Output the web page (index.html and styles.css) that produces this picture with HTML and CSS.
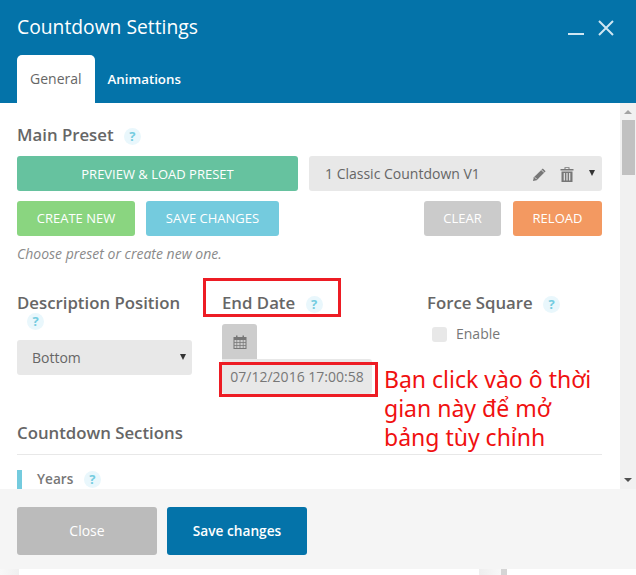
FILE: index.html
```html
<!DOCTYPE html>
<html lang="vi">
<head>
<meta charset="utf-8">
<title>Countdown Settings</title>
<link rel="stylesheet" href="styles.css">
</head>
<body>
<div class="modal">
  <header class="head">
    <div class="title-row">
      <h1 class="title">Countdown Settings</h1>
      <div class="win-btns">
        <span class="min"></span>
        <svg class="close-x" width="16" height="16" viewBox="0 0 16 16"><path d="M1 1l14 14M15 1L1 15" stroke="#cfe6f2" stroke-width="2" fill="none"/></svg>
      </div>
    </div>
    <nav class="tabs">
      <span class="tab active">General</span>
      <span class="tab">Animations</span>
    </nav>
  </header>
  <div class="body">
    <main class="content">
      <h2 class="h">Main Preset <span class="q">?</span></h2>
      <div class="row-preset">
        <button class="btn wide green-dark">PREVIEW &amp; LOAD PRESET</button>
        <div class="preset-select">
          <span>1 Classic Countdown V1</span>
          <svg class="pencil" width="15" height="15" viewBox="0 0 16 16"><path d="M11.500 1.500l3 3L5 14l-4 1 1-4z" fill="#777"/><path d="M3 11l2 2M10 3l3 3" stroke="#e8e8e8" stroke-width="1"/></svg>
          <svg class="trash" width="14" height="16" viewBox="0 0 14 16"><path d="M0.500 3h13v1.500h-13zM4.500 3V1.200h5V3H8.500V2h-3v1z" fill="#777"/><path fill-rule="evenodd" d="M1.500 5.500h11V16h-11zM3.700 7v7.500h1.200V7zM6.400 7v7.500h1.200V7zM9.100 7v7.500h1.200V7z" fill="#777"/></svg>
          <span class="arrow arrow-preset"></span>
        </div>
      </div>
      <div class="row-actions">
        <button class="btn create">CREATE NEW</button>
        <button class="btn save">SAVE CHANGES</button>
        <span class="spacer"></span>
        <button class="btn clear">CLEAR</button>
        <button class="btn reload">RELOAD</button>
      </div>
      <p class="hint">Choose preset or create new one.</p>
      <div class="cols">
        <div class="col col-desc">
          <h2 class="h">Description Position <span class="q q-wrap">?</span></h2>
          <div class="select-box">Bottom<span class="arrow"></span></div>
        </div>
        <div class="col col-date">
          <h2 class="h">End Date <span class="q">?</span></h2>
          <div class="cal">
            <svg width="14" height="14" viewBox="0 0 14 14"><path fill-rule="evenodd" d="M0.500 2h2.500V0.500h1.500V2h5V0.500h1.500V2h2.500v12H0.500zM1.500 5v2h2V5zM4.200 5v2h2.400V5zM7.400 5v2h2.400V5zM10.500 5v2h2V5zM1.500 7.800v2.400h2V7.800zM4.200 7.800v2.400h2.400V7.800zM7.400 7.800v2.400h2.400V7.800zM10.500 7.800v2.400h2V7.800zM1.500 11v2h2v-2zM4.200 11v2h2.400v-2zM7.400 11v2h2.400v-2zM10.500 11v2h2v-2z" fill="#777"/></svg>
          </div>
          <div class="date-input">07/12/2016 17:00:58</div>
        </div>
        <div class="col col-force">
          <h2 class="h">Force Square <span class="q">?</span></h2>
          <label class="enable"><span class="check"></span>Enable</label>
        </div>
      </div>
      <h2 class="h sections">Countdown Sections</h2>
      <div class="section-item">Years <span class="q">?</span></div>
      <div class="mark mark-title"></div>
      <div class="mark mark-date"></div>
      <p class="note">Bạn click vào ô thời gian này để mở bảng tùy chỉnh</p>
    </main>
    <aside class="scrollbar">
      <span class="sb-up"></span>
      <span class="sb-thumb"></span>
      <span class="sb-down"></span>
    </aside>
  </div>
  <footer class="foot">
    <button class="fbtn fclose">Close</button>
    <button class="fbtn fsave">Save changes</button>
  </footer>
  <div class="below"><span class="b1"></span><span class="b2"></span><span class="b3"></span><span class="b4"></span></div>
</div>
</body>
</html>
```
FILE: styles.css
```css
* { box-sizing: border-box; }
html, body { margin: 0; padding: 0; height: 575px; overflow: hidden; background: #fff; }
body { font-family: "Open Sans", sans-serif; color: #666; }
.modal { width: 636px; height: 575px; display: flex; flex-direction: column; }

.head { background: #0473a9; height: 103px; padding: 0 17px; display: flex; flex-direction: column; flex: none; }
.title-row { height: 55px; display: flex; justify-content: space-between; }
.title { margin: 14px 0 0; font-size: 19.300px; line-height: 26px; font-weight: 400; color: #fff; }
.win-btns { display: flex; align-items: flex-start; margin-right: 5px; }
.min { width: 16px; height: 2px; background: #cfe6f2; margin: 33px 14px 0 0; }
.close-x { margin-top: 20px; }
.tabs { display: flex; height: 48px; }
.tab { padding: 0 13px; font-size: 13.300px; line-height: 48px; font-weight: 600; color: #fff; border-radius: 5px 5px 0 0; }
.tab.active { background: #fff; color: #666; font-weight: 400; font-size: 14px; }

.body { flex: none; height: 386px; display: flex; overflow: hidden; }
.content { position: relative; width: 620px; padding: 22px 18px 0 17px; }
.h { margin: 0; font-size: 16.800px; line-height: 20px; font-weight: 600; color: #666; }
.q { display: inline-block; width: 17px; height: 17px; margin-left: 6px; border-radius: 50%; background: #e9f7fc; color: #74cce0; font-size: 13px; line-height: 17px; font-weight: 700; text-align: center; vertical-align: 0; }

button { font-family: inherit; border: 0; color: #fff; padding: 0; }
.btn { height: 35px; border-radius: 3px; font-size: 13px; }
.row-preset { display: flex; justify-content: space-between; margin-top: 11px; }
.wide { width: 281px; }
.green-dark { background: #66c29f; }
.preset-select { position: relative; width: 293px; height: 35px; background: #e8e8e8; border-radius: 3px; font-size: 14px; line-height: 35px; color: #666; padding-left: 16px; }
.pencil { position: absolute; left: 223px; top: 11px; }
.trash { position: absolute; left: 251px; top: 10px; }
.arrow { position: absolute; width: 0; height: 0; border-left: 3.500px solid transparent; border-right: 3.500px solid transparent; border-top: 6px solid #333; }
.arrow-preset { left: 280px; top: 14px; }
.row-actions { display: flex; margin-top: 10px; }
.row-actions .btn { padding-bottom: 2px; }
.create { width: 118px; background: #8ad580; }
.save { width: 133px; margin-left: 11px; background: #74cbde; }
.spacer { flex: 1; }
.clear { width: 77px; background: #cbcbcb; }
.reload { width: 89px; margin-left: 12px; background: #f39961; }
.hint { margin: 8px 0 0; font-size: 14px; line-height: 20px; font-style: italic; color: #8a8a8a; }

.cols { display: flex; margin-top: 29px; }
.col-desc { width: 205px; }
.col-desc .h { width: 175px; }
.q-wrap { margin-left: 10px; display: block; }
.select-box { position: relative; width: 175px; height: 35px; margin-top: 10px; background: #e8e8e8; border-radius: 3px; padding-left: 15px; font-size: 14px; line-height: 35px; color: #666; }
.select-box .arrow { right: 6px; top: 14px; }
.col-date { width: 205px; }
.cal { width: 35px; height: 35px; margin-top: 11px; background: #cdcdcd; border-radius: 3px 3px 0 0; display: flex; align-items: center; justify-content: center; }
.date-input { width: 150px; height: 35px; background: #e8e8e8; border-radius: 0 3px 3px 3px; font-size: 14px; line-height: 35px; text-align: center; color: #777; }
.enable { display: flex; align-items: center; margin: 11px 0 0 5px; font-size: 14px; line-height: 20px; color: #777; }
.check { width: 15px; height: 15px; margin-right: 9px; background: #e8e8e8; border-radius: 3px; }

.sections { margin-top: 29px; padding-bottom: 11px; border-bottom: 1px solid #e8e8e8; }
.section-item { margin-top: 15px; height: 19px; padding-left: 15px; border-left: 5px solid #74cbde; font-size: 13.600px; line-height: 18px; font-weight: 600; color: #777; }
.section-item .q { margin-left: 7px; }

.mark { position: absolute; border: 3px solid #ed1c24; }
.mark-title { left: 203px; top: 175px; width: 138px; height: 39px; }
.mark-date { left: 219px; top: 259px; width: 159px; height: 35px; }
.note { position: absolute; left: 384px; top: 262px; width: 218px; margin: 0; font-family: "Noto Sans", sans-serif; font-size: 23px; line-height: 29px; color: #f01010; }

.scrollbar { position: relative; width: 16px; background: #f1f1f1; }
.sb-up, .sb-down { position: absolute; left: 4px; width: 0; height: 0; border-left: 4px solid transparent; border-right: 4px solid transparent; }
.sb-up { top: 7px; border-bottom: 4px solid #a3a3a3; }
.sb-down { bottom: 7px; border-top: 4px solid #505050; }
.sb-thumb { position: absolute; left: 2px; top: 17px; width: 13px; height: 55px; background: #c1c1c1; }

.foot { flex: none; height: 80px; background: #f5f5f5; padding: 18px 17px 0; display: flex; gap: 10px; }
.fbtn { width: 140px; height: 48px; border-radius: 3px; font-size: 14px; font-weight: 400; padding-bottom: 2px; }
.fclose { background: #bbb; }
.fsave { background: #0473a9; font-weight: 600; font-size: 13.700px; }

.below { flex: 1; display: flex; background: #fff; }
.below span { display: block; height: 6px; }
.b1 { width: 19px; background: linear-gradient(to right, #f8f8f8, #f0f0f0); }
.b2 { width: 460px; }
.b3 { width: 22px; background: linear-gradient(to right, #eeeeee, #f8f8f8); }
.b4 { width: 6px; background: #d5d5d5; }
```
